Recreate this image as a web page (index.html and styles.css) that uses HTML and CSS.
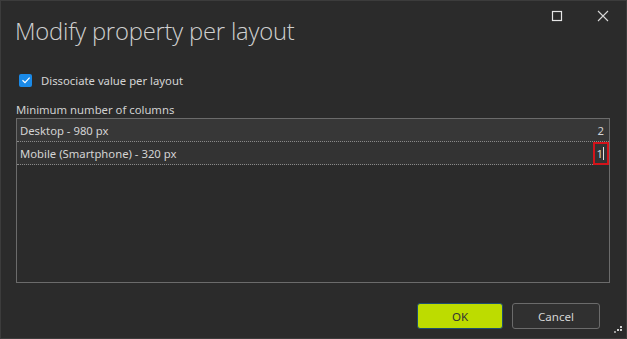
FILE: index.html
```html
<!DOCTYPE html>
<html>
<head>
<meta charset="utf-8">
<link rel="stylesheet" href="styles.css">
</head>
<body>
<div class="dialog">
  <div class="titlebar">
    <h1 class="title">Modify property per layout</h1>
    <div class="winbtns">
      <span class="winbtn"><svg width="12" height="12" viewBox="0 0 12 12"><rect x="1.5" y="1.5" width="9" height="9" fill="none" stroke="#e6e6e6" stroke-width="1.2"/></svg></span>
      <span class="winbtn"><svg width="12" height="12" viewBox="0 0 12 12"><path d="M1 1L11 11M11 1L1 11" stroke="#d8d8d8" stroke-width="1.1"/></svg></span>
    </div>
  </div>
  <label class="check">
    <span class="box"><svg width="10" height="10" viewBox="0 0 10 10"><path d="M1.5 5.2L4 7.6L8.6 2.6" fill="none" stroke="#ffffff" stroke-width="1.2"/></svg></span>
    <span>Dissociate value per layout</span>
  </label>
  <div class="fieldlabel">Minimum number of columns</div>
  <div class="table">
    <div class="row row-first"><span>Desktop - 980 px</span><span class="val">2</span></div>
    <div class="row"><span>Mobile (Smartphone) - 320 px</span><span class="val edit">1<span class="caret"></span></span></div>
  </div>
  <div class="footer">
    <button class="btn ok">OK</button>
    <button class="btn cancel">Cancel</button>
  </div>
  <div class="grip"><svg width="8" height="8" viewBox="0 0 8 8"><rect x="6" y="1" width="2" height="2" fill="#cfcfcf"/><rect x="3" y="4" width="2" height="2" fill="#cfcfcf"/><rect x="6" y="4" width="2" height="2" fill="#cfcfcf"/><rect x="0" y="6" width="2" height="2" fill="#9a9a9a"/></svg></div>
</div>
</body>
</html>
```
FILE: styles.css
```css
html, body {
  margin: 0;
  padding: 0;
  background: #2b2b2b;
}
.dialog {
  position: relative;
  box-sizing: border-box;
  width: 627px;
  height: 339px;
  background: #2b2b2b;
  border: 1px solid #3c3c3c;
  font-family: "Noto Sans", "Open Sans", sans-serif;
  font-size: 11.3px;
  color: #d4d4d4;
  display: flex;
  flex-direction: column;
  padding: 0 16px 0 14px;
}
.titlebar {
  display: flex;
  justify-content: space-between;
  align-items: flex-start;
  height: 71px;
}
.title {
  margin: 13px 0 0 0;
  font-family: "Open Sans", sans-serif;
  font-weight: 300;
  font-size: 23.8px;
  line-height: 34px;
  color: #cfcfcf;
  letter-spacing: -0.2px;
}
.winbtns {
  display: flex;
  gap: 34px;
  margin-top: 9px;
  margin-right: 1px;
}
.winbtn {
  display: flex;
  width: 12px;
  height: 12px;
}
.check {
  display: flex;
  align-items: center;
  gap: 9px;
  margin-left: 4px;
  height: 16px;
}
.box {
  width: 13px;
  height: 13px;
  border-radius: 2px;
  background: #1a8ae8;
  display: flex;
  align-items: center;
  justify-content: center;
}
.fieldlabel {
  margin-top: 14px;
  line-height: 16px;
  color: #d0d0d0;
  margin-left: 1px;
}
.table {
  margin-left: 1px;
  height: 165px;
  box-sizing: border-box;
  border: 1px solid #6b6b6b;
  background: #2b2b2b;
}
.row {
  display: flex;
  justify-content: space-between;
  align-items: center;
  height: 22px;
  padding: 0 5px 0 3px;
  border-bottom: 1px dotted #8a8a8a;
  background: #333333;
}
.row-first {
  background: #373737;
}
.val {
  position: relative;
  display: flex;
  align-items: center;
}
.edit::after {
  content: "";
  position: absolute;
  left: -4px;
  right: -5px;
  top: -4px;
  bottom: -4px;
  border: 2px solid #d3131a;
}
.caret {
  display: inline-block;
  width: 1px;
  height: 13px;
  background: #e0e0e0;
  margin-left: 0;
}
.footer {
  display: flex;
  justify-content: flex-end;
  gap: 9px;
  margin-top: 20px;
  margin-right: 10px;
}
.btn {
  font-family: "Noto Sans", "Open Sans", sans-serif;
  font-size: 11.6px;
  height: 26px;
  border-radius: 3px;
  padding: 0;
}
.ok {
  width: 86px;
  background: #bddc00;
  color: #333;
  border: 1px solid #1f4f6e;
}
.cancel {
  width: 88px;
  background: #303030;
  color: #d4d4d4;
  border: 1px solid #6b6b6b;
}
.grip {
  position: absolute;
  right: 4px;
  bottom: 9px;
  width: 8px;
  height: 8px;
}
```
